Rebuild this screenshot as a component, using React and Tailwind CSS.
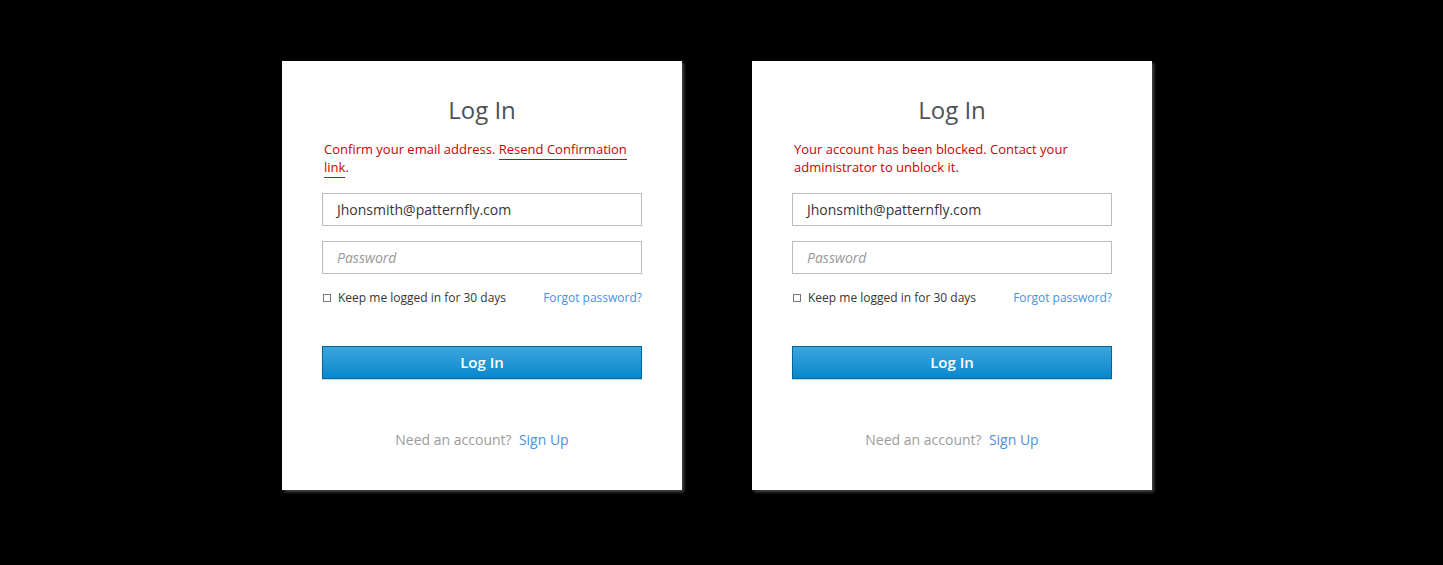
import React from "react";

function Card({ message }) {
  return (
    <div className="w-[400px] h-[429px] bg-white shadow-[2px_2px_3px_rgba(120,120,120,0.6)] px-10 pt-[27px] flex flex-col">
      <h1 className="text-center text-[24px] leading-[44px] text-[#4d5258]">Log In</h1>
      <div className="mt-[8px] h-[36px] text-[13px] leading-[18px] text-[#cc0000] px-[2px]">{message}</div>
      <div className="mt-[17px] h-[33px] border border-[#bbbbbb] flex items-center px-[14px] text-[14px] text-[#363636]">
        Jhonsmith@patternfly.com
      </div>
      <div className="mt-[15px] h-[33px] border border-[#bbbbbb] flex items-center px-[14px] text-[14px] italic text-[#999999]">
        Password
      </div>
      <div className="mt-[16px] flex items-center justify-between text-[12px] leading-[16px]">
        <div className="flex items-center text-[#363636]">
          <span className="w-[8px] h-[8px] border border-[#777] mr-[7px] ml-[1px]"></span>
          Keep me logged in for 30 days
        </div>
        <span className="text-[#4a90e2]">Forgot password?</span>
      </div>
      <div className="mt-[40px] h-[33px] border border-[#00659c] bg-gradient-to-b from-[#39a5dc] to-[#0088ce] flex items-center justify-center text-white text-[15px] font-semibold shadow-[0_1px_1px_rgba(0,0,0,0.15)]">
        Log In
      </div>
      <div className="mt-[50px] text-center text-[14px] text-[#9c9c9c]">
        Need an account?&nbsp; <span className="text-[#4a90e2]">Sign Up</span>
      </div>
    </div>
  );
}

export default function App() {
  return (
    <div
      className="w-[1443px] h-[565px] bg-black flex justify-center gap-[70px] pt-[61px] pr-[9px]"
      style={{ fontFamily: '"Open Sans", sans-serif' }}
    >
      <Card
        message={
          <>
            Confirm your email address.{" "}
            <span className="border-b border-[#cc0000] leading-[16px] pb-[1px]">Resend Confirmation</span>
            <br />
            <span className="border-b border-[#cc0000] pb-[1px]">link</span>.
          </>
        }
      />
      <Card message={<>Your account has been blocked. Contact your<br />administrator to unblock it.</>} />
    </div>
  );
}
